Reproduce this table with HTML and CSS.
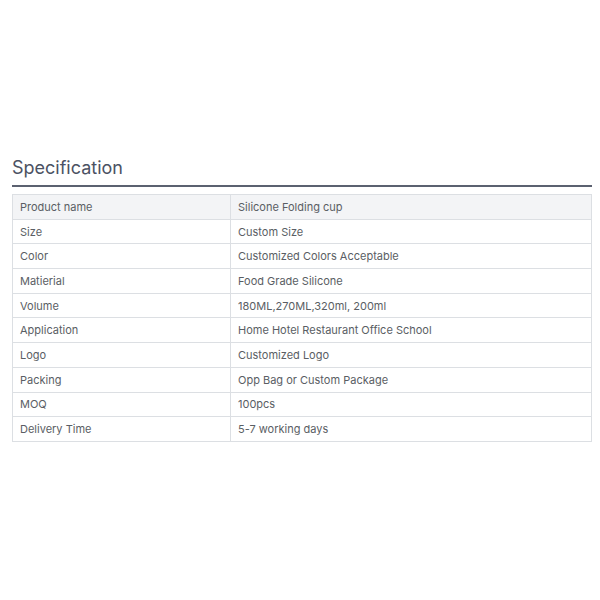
FILE: index.html
```html
<!DOCTYPE html>
<html>
<head>
<meta charset="utf-8">
<link rel="stylesheet" href="styles.css">
</head>
<body>
<div class="wrap">
  <h2 class="title">Specification</h2>
  <table class="spec">
    <tr class="head"><td>Product name</td><td>Silicone Folding cup</td></tr>
    <tr><td>Size</td><td>Custom Size</td></tr>
    <tr><td>Color</td><td>Customized Colors Acceptable</td></tr>
    <tr><td>Matierial</td><td>Food Grade Silicone</td></tr>
    <tr><td>Volume</td><td>180ML,270ML,320ml, 200ml</td></tr>
    <tr><td>Application</td><td>Home Hotel Restaurant Office School</td></tr>
    <tr><td>Logo</td><td>Customized Logo</td></tr>
    <tr><td>Packing</td><td>Opp Bag or Custom Package</td></tr>
    <tr><td>MOQ</td><td>100pcs</td></tr>
    <tr><td>Delivery Time</td><td>5-7 working days</td></tr>
  </table>
</div>
</body>
</html>
```
FILE: styles.css
```css
html, body {
  margin: 0;
  padding: 0;
  background: #ffffff;
  font-family: Inter, "Noto Sans", sans-serif;
}
.wrap {
  padding: 156px 8px 0 12px;
}
.title {
  margin: 0;
  font-size: 18px;
  font-weight: 400;
  line-height: 23px;
  color: #4b5263;
  padding-bottom: 6px;
  border-bottom: 2px solid #5b6170;
}
.spec {
  margin-top: 7px;
  width: 100%;
  border-collapse: collapse;
  font-size: 11px;
  color: #5a5e64;
}
.spec td {
  border: 1px solid #dcdfe3;
  height: 24.7px;
  padding: 0 8px 0 7px;
  box-sizing: border-box;
  vertical-align: middle;
}
.spec td:first-child {
  width: 218px;
}
.spec tr.head td {
  background: #f3f4f6;
}
```
